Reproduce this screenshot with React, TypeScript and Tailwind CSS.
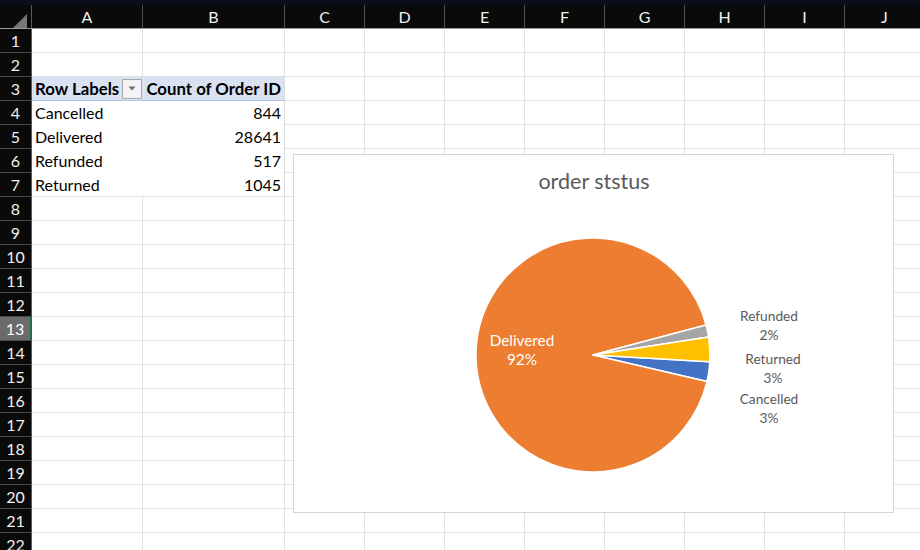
import React from "react";

const COLS = [
  { l: "A", w: "w-[111px]" },
  { l: "B", w: "w-[142px]" },
  { l: "C", w: "w-[80px]" },
  { l: "D", w: "w-[80px]" },
  { l: "E", w: "w-[80px]" },
  { l: "F", w: "w-[80px]" },
  { l: "G", w: "w-[80px]" },
  { l: "H", w: "w-[80px]" },
  { l: "I", w: "w-[80px]" },
  { l: "J", w: "w-[80px]" },
];

const PIVOT: Record<number, [string, string]> = {
  4: ["Cancelled", "844"],
  5: ["Delivered", "28641"],
  6: ["Refunded", "517"],
  7: ["Returned", "1045"],
};

function Pie() {
  const cx = 299;
  const cy = 200;
  const r = 117;
  const data = [
    { v: 844, c: "#4472c4" },
    { v: 28641, c: "#ed7d31" },
    { v: 517, c: "#a5a5a5" },
    { v: 1045, c: "#ffc000" },
  ];
  const total = data.reduce((s, d) => s + d.v, 0);
  let a = 93.3;
  const pt = (deg: number) => {
    const rad = (deg * Math.PI) / 180;
    return [cx + r * Math.sin(rad), cy - r * Math.cos(rad)];
  };
  const paths = data.map((d, i) => {
    const sweep = (d.v / total) * 360;
    const [x1, y1] = pt(a);
    const [x2, y2] = pt(a + sweep);
    const large = sweep > 180 ? 1 : 0;
    const p = `M${cx},${cy} L${x1.toFixed(2)},${y1.toFixed(2)} A${r},${r} 0 ${large} 1 ${x2.toFixed(2)},${y2.toFixed(2)} Z`;
    a += sweep;
    return <path key={i} d={p} fill={d.c} stroke="#ffffff" strokeWidth={1.5} strokeLinejoin="round" />;
  });
  return (
    <svg width={599} height={357} viewBox="0 0 599 357" className="block font-[Lato,sans-serif]">
      <text x={300} y={26} textAnchor="middle" dominantBaseline="central" fontSize={21.5} fill="#595959">
        order ststus
      </text>
      {paths}
      <g fontSize={15.3} fill="#ffffff" textAnchor="middle" dominantBaseline="central">
        <text x={228} y={185}>Delivered</text>
        <text x={228} y={204}>92%</text>
      </g>
      <g fontSize={13.7} fill="#595959" textAnchor="middle" dominantBaseline="central">
        <text x={475} y={160}>Refunded</text>
        <text x={475} y={179}>2%</text>
        <text x={479} y={203}>Returned</text>
        <text x={479} y={222}>3%</text>
        <text x={475} y={243}>Cancelled</text>
        <text x={475} y={262}>3%</text>
      </g>
    </svg>
  );
}

function DataCell({ row, col, w }: { row: number; col: number; w: string }) {
  if (row === 3 && col === 0) {
    return (
      <div
        className={`${w} h-full shrink-0 flex items-center justify-between bg-[#d9e1f2] border-b border-[#b4c6e7] pl-[3px] text-[16.8px] font-bold text-black whitespace-nowrap`}
      >
        <span>Row Labels</span>
        <span className="w-[20px] h-[20px] mr-[1px] bg-[#f3f3f3] border border-[#a8a8a8] flex items-center justify-center">
          <svg width="8" height="5" viewBox="0 0 8 5">
            <path d="M0.5 0.5 L7.5 0.5 L4 4.5 Z" fill="#6d6d6d" />
          </svg>
        </span>
      </div>
    );
  }
  if (row === 3 && col === 1) {
    return (
      <div
        className={`${w} h-full shrink-0 flex items-center justify-end bg-[#d9e1f2] border-b border-r border-b-[#b4c6e7] border-r-[#dcdcdc] pr-[3px] text-[16.8px] font-bold text-black whitespace-nowrap`}
      >
        Count of Order ID
      </div>
    );
  }
  if (row >= 4 && row <= 7 && col <= 1) {
    const last = row === 7;
    const [label, val] = PIVOT[row];
    if (col === 0) {
      return (
        <div
          className={`${w} h-full shrink-0 flex items-center pl-[3px] text-[16px] text-black bg-white ${last ? "border-b border-[#e1e1e1]" : ""}`}
        >
          {label}
        </div>
      );
    }
    return (
      <div
        className={`${w} h-full shrink-0 flex items-center justify-end pr-[3px] text-[16px] text-black bg-white border-r border-r-[#dcdcdc] ${last ? "border-b border-b-[#e1e1e1]" : ""}`}
      >
        {val}
      </div>
    );
  }
  return <div className={`${w} h-full shrink-0 border-r border-b border-[#e1e1e1] bg-white`} />;
}

export default function App() {
  const rows = Array.from({ length: 22 }, (_, i) => i + 1);
  return (
    <div className="relative w-[920px] h-[550px] overflow-hidden bg-white font-[Lato,sans-serif]">
      <div className="h-[5px] bg-[#0b0e18]" />
      <div className="flex h-[24px] bg-[#0a0a0a] border-b border-[#9a9a9a]">
        <div className="relative w-[32px] h-full shrink-0 border-r border-[#5a5a5a]">
          <svg className="absolute left-0 top-0" width="31" height="23" viewBox="0 0 31 23">
            <path d="M13 23 L27 9 L27 23 Z" fill="#777777" />
          </svg>
        </div>
        {COLS.map((c) => (
          <div
            key={c.l}
            className={`${c.w} h-full shrink-0 border-r border-[#4f4f4f] flex items-center justify-center text-[16px] text-[#f0f0f0]`}
          >
            {c.l}
          </div>
        ))}
      </div>
      {rows.map((r) => (
        <div key={r} className="flex h-[24px]">
          <div
            className={`w-[32px] h-full shrink-0 flex items-center justify-center text-[16px] border-b border-[#4a4a4a] ${
              r === 13 ? "bg-[#6b6b6b] text-white border-r-2 border-r-[#1e7145]" : "bg-[#0a0a0a] text-[#f0f0f0] border-r border-r-[#5a5a5a]"
            }`}
          >
            {r}
          </div>
          {COLS.map((c, ci) => (
            <DataCell key={c.l} row={r} col={ci} w={c.w} />
          ))}
        </div>
      ))}
      <div className="absolute left-[293px] top-[154px] w-[601px] h-[359px] bg-white border border-[#d4d4d4]">
        <Pie />
      </div>
    </div>
  );
}
